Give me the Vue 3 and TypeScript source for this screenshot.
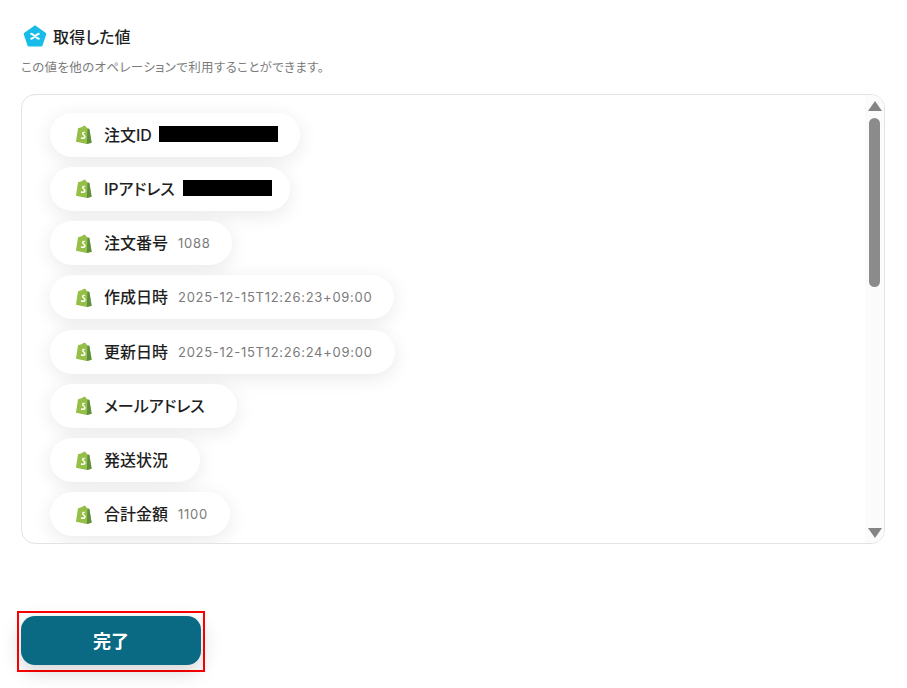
<script setup lang="ts">
interface OutputItem {
  label: string
  value?: string
  maskWidth?: number
}

const items: OutputItem[] = [
  { label: '注文ID', maskWidth: 119 },
  { label: 'IPアドレス', maskWidth: 89 },
  { label: '注文番号', value: '1088' },
  { label: '作成日時', value: '2025-12-15T12:26:23+09:00' },
  { label: '更新日時', value: '2025-12-15T12:26:24+09:00' },
  { label: 'メールアドレス', value: '' },
  { label: '発送状況', value: '' },
  { label: '合計金額', value: '1100' },
]
</script>

<template>
  <main class="page">
    <h2 class="title">
      <svg class="title-icon" viewBox="0 0 24 24" width="24" height="24">
        <path
          d="M12 1.2 22.6 8.8a1.6 1.6 0 0 1 .6 1.8l-3.7 10.9a1.6 1.6 0 0 1-1.5 1.1H6a1.6 1.6 0 0 1-1.5-1.1L.8 10.6a1.6 1.6 0 0 1 .6-1.8L12 1.2z"
          fill="#17bde8"
        />
        <path d="M8.2 9.8c2.2.4 5.4 4.6 7.6 5M15.8 9.8c-2.2.4-5.4 4.6-7.6 5" fill="none" stroke="#fff" stroke-width="1.9" stroke-linecap="round" />
      </svg>
      取得した値
    </h2>
    <p class="desc">この値を他のオペレーションで利用することができます。</p>

    <section class="box">
      <ul class="list">
        <li v-for="item in items" :key="item.label" class="pill">
          <svg class="shop-icon" viewBox="0 0 18 20" width="17" height="19">
            <path d="M13 3.6 11 .9C9.5.6 8.4 1 7.6 2L3.2 3.4 1 17.6 12.6 20l5-1.2L15.2 4.2z" fill="#95bf47" />
            <path d="M13.2 3.5 12.6 20l5-1.2L15.2 4.2z" fill="#5e8e3e" />
            <path d="M10.6 7.4c-.7-.3-2.8-.5-3.2 1.2-.4 1.9 2.6 2.3 2.2 3.9-.3 1-1.7 1-2.9.2l-.5 1.7c1.6.9 4.5.6 5-1.6.5-2.3-2.5-2.7-2.2-4 .2-.7 1.1-.7 1.9-.4z" fill="#fff" />
          </svg>
          <span class="label">{{ item.label }}</span>
          <span v-if="item.maskWidth" class="mask" :style="{ width: item.maskWidth + 'px' }"></span>
          <span v-else class="value">{{ item.value }}</span>
        </li>
      </ul>
      <div class="scrollbar">
        <span class="arrow up"></span>
        <span class="thumb"></span>
        <span class="arrow down"></span>
      </div>
    </section>

    <div class="actions">
      <button class="done" type="button">完了</button>
    </div>
  </main>
</template>

<style scoped>
.page {
  width: 907px;
  height: 688px;
  box-sizing: border-box;
  padding: 24px 22px 0 21px;
  background: #fff;
  color: #1f1f1f;
  font-family: Inter, "Noto Sans CJK JP", sans-serif;
  font-feature-settings: "palt";
  overflow: hidden;
}

.title {
  display: flex;
  align-items: center;
  gap: 6px;
  height: 24px;
  margin: 0 0 0 2px;
  font-size: 16px;
  font-weight: 500;
  letter-spacing: 0.2px;
}

.title-icon {
  flex: none;
}

.desc {
  margin: 11px 0 0;
  font-size: 12.5px;
  line-height: 17px;
  color: #7c7c7c;
  letter-spacing: 0.35px;
}

.box {
  display: flex;
  justify-content: space-between;
  height: 450px;
  margin-top: 18px;
  box-sizing: border-box;
  border: 1px solid #e3e3e3;
  border-radius: 14px;
  overflow: hidden;
}

.list {
  display: flex;
  flex-direction: column;
  align-items: flex-start;
  gap: 10.25px;
  margin: 0;
  padding: 17.6px 0 0 28px;
  list-style: none;
}

.pill {
  display: flex;
  align-items: center;
  flex: none;
  height: 44px;
  box-sizing: border-box;
  padding: 0 22px 0 25px;
  border-radius: 22px;
  background: #fff;
  box-shadow: 0 4px 20px rgba(0, 0, 0, 0.09);
}

.pill:nth-child(2) {
  padding-right: 18px;
}

.shop-icon {
  flex: none;
  margin-right: 12px;
}

.label {
  font-size: 16px;
  font-weight: 500;
  line-height: 20px;
  color: #1f1f1f;
  white-space: nowrap;
}

.value {
  margin-left: 10px;
  font-size: 13px;
  letter-spacing: 0.72px;
  line-height: 20px;
  color: #7b7b7b;
  white-space: nowrap;
}

.mask {
  height: 16px;
  margin: -2px 0 0 7px;
  background: #000;
}

.pill:nth-child(2) .mask {
  margin-left: 8px;
}

.scrollbar {
  display: flex;
  flex-direction: column;
  align-items: center;
  width: 19px;
  flex: none;
  background: #fbfbfb;
  padding-top: 6px;
  box-sizing: border-box;
}

.thumb {
  width: 11px;
  height: 169px;
  margin-top: 7px;
  border-radius: 6px;
  background: #8b8b8b;
}

.arrow {
  width: 0;
  height: 0;
  border-left: 7px solid transparent;
  border-right: 7px solid transparent;
}

.arrow.up {
  border-bottom: 10px solid #848484;
}

.arrow.down {
  margin-top: auto;
  margin-bottom: 5px;
  border-top: 10px solid #848484;
}

.actions {
  display: inline-block;
  margin: 67px 0 0 -4px;
  padding: 3px 2px 5px;
  border: 2px solid #f00;
}

.done {
  display: block;
  width: 180px;
  height: 49px;
  padding: 0 0 2px;
  border: 0;
  border-radius: 14px;
  background: #0a6a83;
  color: #fff;
  font-family: inherit;
  font-size: 18px;
  font-weight: 700;
  box-shadow: 0 6px 20px rgba(0, 0, 0, 0.18);
}
</style>
